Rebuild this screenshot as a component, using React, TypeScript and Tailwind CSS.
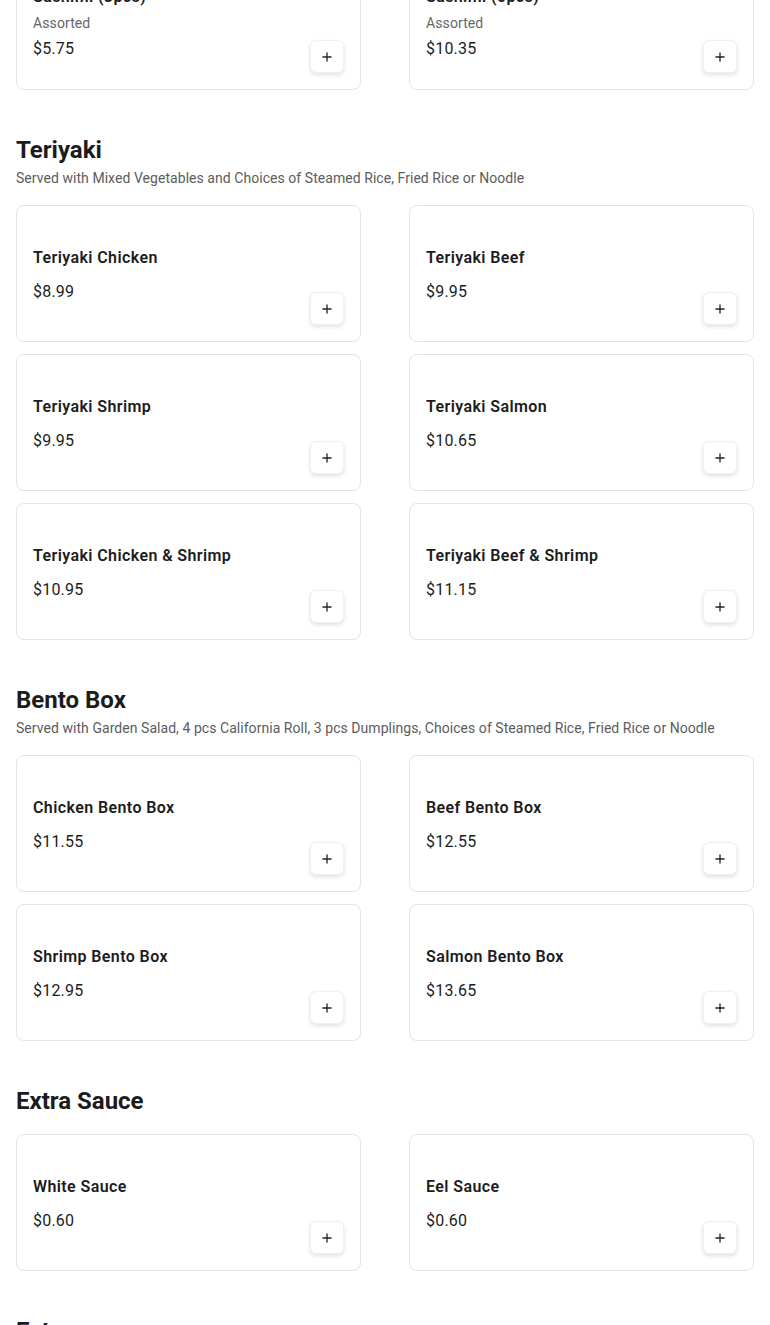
import { Plus } from 'lucide-react';

type Item = { name: string; desc?: string; price: string };
type Section = { title: string; subtitle?: string; items: Item[] };

const sections: Section[] = [
    {
        title: 'Teriyaki',
        subtitle: 'Served with Mixed Vegetables and Choices of Steamed Rice, Fried Rice or Noodle',
        items: [
            { name: 'Teriyaki Chicken', price: '$8.99' },
            { name: 'Teriyaki Beef', price: '$9.95' },
            { name: 'Teriyaki Shrimp', price: '$9.95' },
            { name: 'Teriyaki Salmon', price: '$10.65' },
            { name: 'Teriyaki Chicken & Shrimp', price: '$10.95' },
            { name: 'Teriyaki Beef & Shrimp', price: '$11.15' },
        ],
    },
    {
        title: 'Bento Box',
        subtitle: 'Served with Garden Salad, 4 pcs California Roll, 3 pcs Dumplings, Choices of Steamed Rice, Fried Rice or Noodle',
        items: [
            { name: 'Chicken Bento Box', price: '$11.55' },
            { name: 'Beef Bento Box', price: '$12.55' },
            { name: 'Shrimp Bento Box', price: '$12.95' },
            { name: 'Salmon Bento Box', price: '$13.65' },
        ],
    },
    {
        title: 'Extra Sauce',
        items: [
            { name: 'White Sauce', price: '$0.60' },
            { name: 'Eel Sauce', price: '$0.60' },
        ],
    },
    {
        title: 'Extra',
        items: [],
    },
];

const MenuCard = ({ item }: { item: Item }) => (
    <div className="flex min-h-[137px] rounded-lg border border-[#e4e4e4] bg-white p-4">
        <div className="flex flex-1 flex-col justify-center pt-[2px]">
            <h3 className="text-base leading-6 font-semibold tracking-[0.4px] text-[#1c1c1c]">{item.name}</h3>
            {item.desc && <p className="mt-1 text-sm leading-5 tracking-[0.1px] text-[#666]">{item.desc}</p>}
            <p className={`${item.desc ? 'mt-1' : 'mt-[10px]'} text-base leading-6 tracking-[0.2px] text-[#1c1c1c]`}>{item.price}</p>
        </div>
        <button className="flex h-[33px] w-[34px] shrink-0 items-center justify-center self-end rounded-md border border-[#f0f0f0] bg-white text-[#222] shadow-[0_2px_4px_rgba(0,0,0,0.12)]">
            <Plus className="h-3.5 w-3.5" strokeWidth={2.25} />
        </button>
    </div>
);

const App = () => {
    return (
        <div className="min-h-screen overflow-hidden bg-white px-4 font-['Roboto',sans-serif]">
            {/* scrolled past the Sashimi heading */}
            <div className="-mt-[47px] grid grid-cols-2 gap-x-12 gap-y-3">
                <MenuCard item={{ name: 'Sashimi (3pcs)', desc: 'Assorted', price: '$5.75' }} />
                <MenuCard item={{ name: 'Sashimi (6pcs)', desc: 'Assorted', price: '$10.35' }} />
            </div>

            {sections.map((section) => (
                <section key={section.title} className="mt-11">
                    <h2 className="text-2xl leading-8 font-bold text-[#1c1c1c]">{section.title}</h2>
                    {section.subtitle && (
                        <p className="mt-0.5 text-sm leading-5 tracking-[0.05px] text-[#5c5c5c]">{section.subtitle}</p>
                    )}
                    {section.items.length > 0 && (
                        <div className="mt-[17px] grid grid-cols-2 gap-x-12 gap-y-3">
                            {section.items.map((item) => (
                                <MenuCard key={item.name} item={item} />
                            ))}
                        </div>
                    )}
                </section>
            ))}
        </div>
    );
};

export default App;
